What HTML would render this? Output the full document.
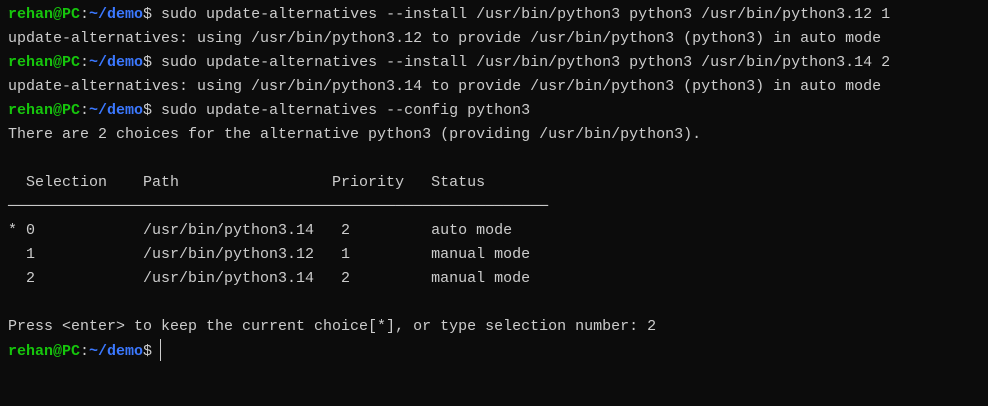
<!DOCTYPE html>
<html><head><style>
body{margin:0;background:#0c0c0c;width:988px;height:406px;overflow:hidden}
pre{margin:0;padding:3px 0 0 8px;font-family:"Liberation Mono",monospace;font-size:15px;line-height:24px;color:#cccccc}
.g{color:#16c60c;font-weight:bold}.b{color:#3b78ff;font-weight:bold}
.c{display:inline-block;width:1px;height:22px;background:#cccccc;vertical-align:-6px;margin-left:8px}
</style></head><body><pre><span class="g">rehan@PC</span>:<span class="b">~/demo</span>$ sudo update-alternatives --install /usr/bin/python3 python3 /usr/bin/python3.12 1
update-alternatives: using /usr/bin/python3.12 to provide /usr/bin/python3 (python3) in auto mode
<span class="g">rehan@PC</span>:<span class="b">~/demo</span>$ sudo update-alternatives --install /usr/bin/python3 python3 /usr/bin/python3.14 2
update-alternatives: using /usr/bin/python3.14 to provide /usr/bin/python3 (python3) in auto mode
<span class="g">rehan@PC</span>:<span class="b">~/demo</span>$ sudo update-alternatives --config python3
There are 2 choices for the alternative python3 (providing /usr/bin/python3).

  Selection    Path                 Priority   Status
────────────────────────────────────────────────────────────
* 0            /usr/bin/python3.14   2         auto mode
  1            /usr/bin/python3.12   1         manual mode
  2            /usr/bin/python3.14   2         manual mode

Press &lt;enter&gt; to keep the current choice[*], or type selection number: 2
<span class="g">rehan@PC</span>:<span class="b">~/demo</span>$<span class="c"></span></pre></body></html>
